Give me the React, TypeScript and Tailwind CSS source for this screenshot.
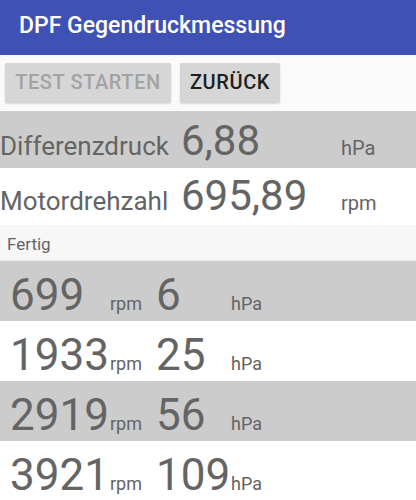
import React from "react";

const rows = [
  { rpm: "699", hpa: "6", gray: true },
  { rpm: "1933", hpa: "25", gray: false },
  { rpm: "2919", hpa: "56", gray: true },
  { rpm: "3921", hpa: "109", gray: false },
];

export default function App() {
  return (
    <div
      className="w-[416px] h-[500px] overflow-hidden bg-[#fafafa] text-[#646464]"
      style={{ fontFamily: "Roboto, 'Noto Sans', sans-serif" }}
    >
      <div className="h-[55px] bg-[#3f51b5] pl-[19px] pt-[14px]">
        <div className="text-[23px] leading-none font-medium text-white">DPF Gegendruckmessung</div>
      </div>

      <div className="flex gap-[9px] pl-[5px] pt-[8px] h-[56px]">
        <div className="h-[40px] w-[166px] bg-[#d6d6d6] rounded-[2px] shadow-[0_1px_2px_rgba(0,0,0,0.15)] flex justify-center pt-[9px] text-[20px] tracking-[0.03em] leading-none font-medium text-[#a3a3a3]">
          TEST STARTEN
        </div>
        <div className="h-[40px] w-[100px] bg-[#d6d6d6] rounded-[2px] shadow-[0_1px_2px_rgba(0,0,0,0.15)] flex justify-center pt-[9px] text-[20px] tracking-[0.03em] leading-none font-medium text-[#1e1e1e]">
          ZURÜCK
        </div>
      </div>

      <div className="h-[57px] bg-[#cccccc] flex items-baseline pt-[9px] leading-none">
        <div className="w-[181px] text-[26px]">Differenzdruck</div>
        <div className="w-[160px] text-[42px]">6,88</div>
        <div className="text-[20px]">hPa</div>
      </div>
      <div className="h-[57px] bg-white flex items-baseline pt-[7px] leading-none">
        <div className="w-[181px] text-[26px]">Motordrehzahl</div>
        <div className="w-[160px] text-[42px]">695,89</div>
        <div className="text-[20px]">rpm</div>
      </div>

      <div className="h-[36px] bg-[#f7f7f7] border-b border-[#ececec] pl-[7px] pt-[11px] text-[17px] leading-none">
        Fertig
      </div>

      {rows.map((r) => (
        <div
          key={r.rpm}
          className={`h-[60px] flex items-baseline pl-[10px] pt-[12px] leading-none ${
            r.gray ? "bg-[#cccccc]" : "bg-white"
          }`}
        >
          <div className="w-[100px] text-[44px]">{r.rpm}</div>
          <div className="w-[46px] text-[18px]">rpm</div>
          <div className="w-[75px] text-[44px]">{r.hpa}</div>
          <div className="text-[18px]">hPa</div>
        </div>
      ))}
    </div>
  );
}
